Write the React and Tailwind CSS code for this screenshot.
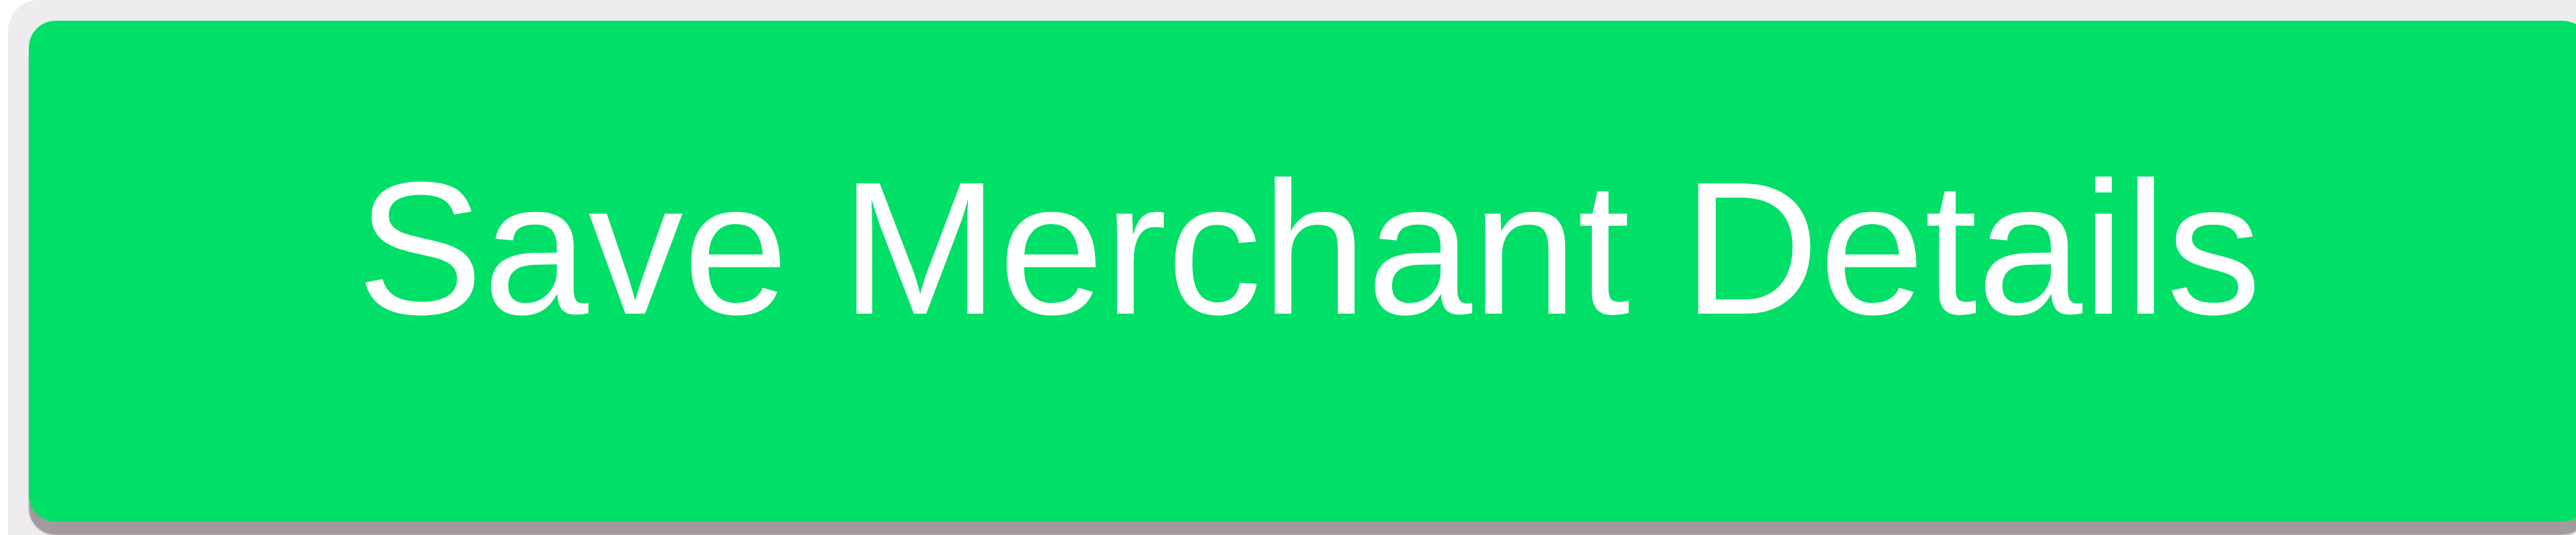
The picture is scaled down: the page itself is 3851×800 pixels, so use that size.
export default function App() {
  return (
    <div className="w-[3851px] h-[800px] overflow-hidden bg-white pl-[12px]">
      {/* light frame around the button */}
      <div className="h-full rounded-tl-[46px] bg-[#eeecee] pl-[31px] pt-[31px]">
        <button
          type="button"
          className="flex w-[3828px] h-[749px] items-start justify-center pt-[199px] rounded-[40px] bg-[#00e068] shadow-[0_20px_2px_#a29a9e]"
        >
          <span className="whitespace-nowrap text-white text-[283px] leading-none font-normal font-['Liberation_Sans',Arial,sans-serif]">
            Save Merchant Details
          </span>
        </button>
      </div>
    </div>
  );
}
